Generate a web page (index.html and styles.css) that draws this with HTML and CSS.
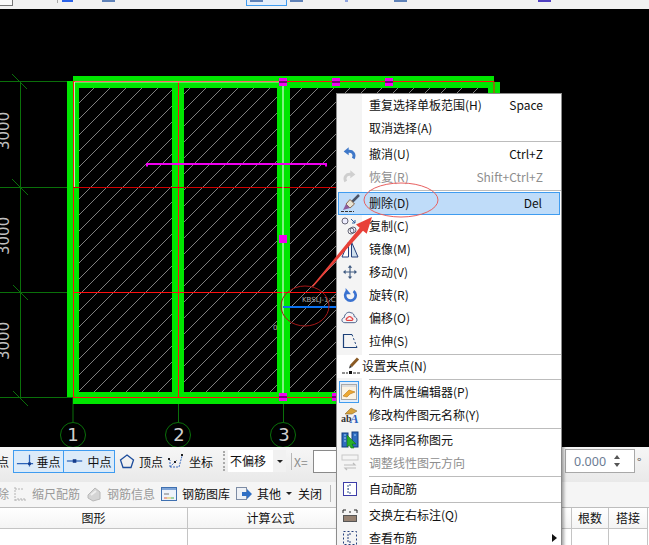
FILE: index.html
```html
<!DOCTYPE html>
<html lang="en">
<head>
    <meta charset="UTF-8">
    <meta name="viewport" content="width=device-width, initial-scale=1.0">
    <title>板受力筋</title>
    <link rel="stylesheet" href="styles.css">
</head>
<body>
    <div class="page">
        <!-- only the bottom edge of the ribbon is visible -->
        <div class="topbar">
            <span class="top-box"></span>
            <span class="top-sep"></span>
            <span class="top-icon top-blue"></span>
            <span class="top-icon top-steel"></span>
            <span class="top-selected"><span class="top-icon top-steel"></span></span>
            <span class="top-icon top-steel top-after"></span>
            <span class="top-icon top-tiny"></span>
            <span class="top-icon top-steel top-far"></span>
            <span class="top-icon top-purple"></span>
        </div>

        <svg class="canvas" width="649" height="438" viewBox="0 9 649 438">
            <defs>
                <pattern id="hatch" width="16" height="16" patternUnits="userSpaceOnUse" patternTransform="translate(6 0)">
                    <path d="M-1 17L17 -1" stroke="#b4b4b4" stroke-width="0.7"/>
                </pattern>
            </defs>
            <rect x="0" y="9" width="649" height="438" fill="#000"/>

            <!-- axis lines -->
            <g stroke="#0a700a" fill="none">
                <path d="M0 81.5H73M0 187.5H73M0 292.5H73M0 397.5H73"/>
                <path d="M20.5 81V397"/>
                <path d="M12 74L27 89M12 179L28 195M13 285L28 300M13 391L28 406"/>
                <path d="M73 397V422M178.5 397V422M283.5 397V422"/>
                <circle cx="73" cy="435" r="12.5"/>
                <circle cx="178" cy="435" r="12.5"/>
                <circle cx="283" cy="435" r="12.5"/>
            </g>
            <g class="dim-text">
                <text transform="translate(9 150) rotate(-90)">3000</text>
                <text transform="translate(9 255) rotate(-90)">3000</text>
                <text transform="translate(9 360) rotate(-90)">3000</text>
            </g>
            <g class="axis-text">
                <text x="73" y="441">1</text>
                <text x="179" y="441">2</text>
                <text x="284" y="441">3</text>
            </g>

            <!-- slab cells -->
            <rect x="79" y="88" width="93" height="304" fill="url(#hatch)"/>
            <rect x="184" y="88" width="93" height="304" fill="url(#hatch)"/>
            <rect x="290" y="88" width="200" height="304" fill="url(#hatch)"/>

            <!-- beams -->
            <g fill="#00e600">
                <rect x="73" y="76" width="421" height="12"/>
                <rect x="488" y="82" width="12" height="20"/>
                <rect x="67" y="81" width="12" height="316"/>
                <rect x="172" y="88" width="12" height="304"/>
                <rect x="277" y="88" width="13" height="304"/>
                <rect x="73" y="392" width="300" height="12"/>
            </g>
            <g stroke="#ff1010" fill="none">
                <path d="M73 81.5H494V100M73.5 81V398M178.5 81V398M73 397.5H373"/>
                <path d="M73 187.5H340" stroke="#d00000"/>
                <path d="M73 292.5H340"/>
            </g>
            <path d="M283 82V397" stroke="#fff"/>
            <path d="M74.5 82H282M74.5 82V187" stroke="#fff" stroke-width="0.7"/>

            <!-- picked bar -->
            <path d="M147 166.5V164H326V166.5" stroke="#f000f0" stroke-width="2" fill="none"/>
            <path d="M283 307H340" stroke="#0a70f0" stroke-width="2"/>
            <text class="bar-label" x="302" y="302">KBSLJ-1:C</text>
            <text class="bar-label" x="273" y="330">0</text>

            <!-- grips -->
            <g fill="#f000f0">
                <rect x="279" y="78" width="8" height="8"/>
                <rect x="332" y="78" width="8" height="8"/>
                <rect x="385" y="78" width="8" height="8"/>
                <rect x="279" y="235" width="8" height="8"/>
                <rect x="279" y="393" width="8" height="8"/>
                <rect x="332" y="393" width="8" height="8"/>
            </g>
            <path d="M279 82H287M332 82H340M385 82H393M279 397H287M332 397H340" stroke="#000"/>
        </svg>

        <div class="toolbar toolbar-snap">
            <span class="tool tool-cut">点</span>
            <span class="tool tool-on tool-first">
                <svg width="18" height="16" viewBox="0 0 20 16"><path d="M1 11H19M15 1V14" stroke="#2b62b8" stroke-width="1.4"/><rect x="13.5" y="9.5" width="3" height="3" fill="#143c8c"/></svg>
                垂点
            </span>
            <span class="tool tool-on">
                <svg width="18" height="16" viewBox="0 0 20 16"><path d="M1 8H18" stroke="#2b62b8" stroke-width="1.4"/><rect x="7.5" y="6" width="4" height="4" fill="#143c8c"/></svg>
                中点
            </span>
            <span class="tool tool-plain">
                <svg width="16" height="16" viewBox="0 0 16 16"><path d="M8 2L14.5 7L12 14.5H4L1.500 7Z" fill="none" stroke="#1d4d9c" stroke-width="1.300"/></svg>
                顶点
            </span>
            <span class="tool tool-plain">
                <svg width="18" height="18" viewBox="0 0 18 18"><path d="M3 15H12L15 4M3 15L3 8M3 15L10 8" fill="none" stroke="#3c6cc0" stroke-dasharray="2 1"/><rect x="1" y="6" width="2" height="2" fill="#222"/><rect x="14" y="2" width="2" height="2" fill="#222"/><rect x="7" y="9" width="2" height="2" fill="#222"/></svg>
                坐标
            </span>
            <span class="grip"></span>
            <span class="combo">不偏移<span class="combo-arrow"></span></span>
            <span class="rule"></span>
            <span class="coord-label">X=</span>
            <span class="coord-input"></span>
            <span class="angle-input">0.000<span class="spin"><i class="spin-up"></i><i class="spin-down"></i></span></span>
            <span class="degree">°</span>
        </div>

        <div class="toolbar toolbar-bars">
            <span class="bar-item bar-off bar-cut">除</span>
            <span class="bar-item bar-off bar-scale">
                <svg width="14" height="16" viewBox="0 0 14 16"><path d="M2 1V15M2 14H13M5 14V11M8 14V11M11 14V11M2 3H11" fill="none" stroke="#b4b4b4" stroke-dasharray="2 1"/></svg>
                缩尺配筋
            </span>
            <span class="bar-item bar-off bar-info">
                <svg width="16" height="16" viewBox="0 0 16 16"><path d="M2 9L9 2L14 6V13L7 15L2 12Z" fill="#d4d4d4" stroke="#b8b8b8"/><path d="M5 9L10 5" stroke="#eee" stroke-width="2"/></svg>
                钢筋信息
            </span>
            <span class="bar-item bar-lib">
                <svg width="16" height="14" viewBox="0 0 16 14"><rect x="0.500" y="0.500" width="15" height="13" fill="#eef3fb" stroke="#3f70b0"/><rect x="1" y="1" width="14" height="2" fill="#7fa5d8"/><path d="M3 7H8" stroke="#777"/><path d="M3 11H6" stroke="#e06040"/><path d="M6 11H10" stroke="#e0c040"/><path d="M10 11H13" stroke="#50b050"/></svg>
                钢筋图库
            </span>
            <span class="bar-item bar-other">
                <svg width="16" height="16" viewBox="0 0 16 16"><rect x="0.500" y="1.500" width="10" height="12" fill="#eef1f6" stroke="#7d8ca4"/><path d="M6 6H11V3L16 8L11 13V10H6Z" fill="#2f6fc4"/></svg>
                其他<span class="mini-arrow"></span>
            </span>
            <span class="bar-item bar-close">关闭</span>
            <span class="rule rule-bar"></span>
        </div>

        <div class="rebar-table">
            <div class="cell cell-head">图形</div>
            <div class="cell cell-head">计算公式</div>
            <div class="cell cell-head"></div>
            <div class="cell cell-head">根数</div>
            <div class="cell cell-head">搭接</div>
            <div class="cell"></div>
            <div class="cell"></div>
            <div class="cell"></div>
            <div class="cell"></div>
            <div class="cell"></div>
        </div>

        <!-- context menu -->
        <div class="menu">
            <div class="menu-item"><span class="menu-icon"></span><span class="menu-label">重复选择单板范围(H)</span><span class="menu-key">Space</span></div>
            <div class="menu-item"><span class="menu-icon"></span><span class="menu-label">取消选择(A)</span></div>
            <div class="menu-sep"></div>
            <div class="menu-item">
                <span class="menu-icon"><svg width="15" height="15" viewBox="0 0 18 18"><path d="M13.500 15C16 10 13 5.500 7 6.500" fill="none" stroke="#3f78c8" stroke-width="3.500"/><path d="M2 6.500L8 1.500V11Z" fill="#3f78c8"/></svg></span>
                <span class="menu-label">撤消(U)</span><span class="menu-key">Ctrl+Z</span>
            </div>
            <div class="menu-item item-off">
                <span class="menu-icon"><svg width="15" height="15" viewBox="0 0 18 18"><path d="M4.500 15C2 10 5 5.500 11 6.500" fill="none" stroke="#cfcfcf" stroke-width="3.500"/><path d="M16 6.500L10 1.500V11Z" fill="#cfcfcf"/></svg></span>
                <span class="menu-label">恢复(R)</span><span class="menu-key">Shift+Ctrl+Z</span>
            </div>
            <div class="menu-sep"></div>
            <div class="menu-item item-active">
                <span class="menu-icon"><svg width="20" height="20" viewBox="0 0 20 20"><path d="M18 2L11 9" stroke="#4a5468" stroke-width="2.500"/><path d="M9 6.500L13.500 11L9 15L5 11Z" fill="#e8e4d4" stroke="#8a6a50"/><path d="M5 11L9 15L2 17Z" fill="#8c5c9c"/><path d="M0 18.500H13" stroke="#333" stroke-dasharray="3 1"/></svg></span>
                <span class="menu-label">删除(D)</span><span class="menu-key">Del</span>
            </div>
            <div class="menu-item">
                <span class="menu-icon"><svg width="20" height="20" viewBox="0 0 20 20"><circle cx="5" cy="5" r="3" fill="#eef" stroke="#667"/><circle cx="13" cy="14" r="3" fill="#eef" stroke="#667"/><circle cx="11" cy="15" r="3" fill="none" stroke="#667"/><path d="M11 3L15 7M15 4V7H12" fill="none" stroke="#3060a0"/></svg></span>
                <span class="menu-label">复制(C)</span>
            </div>
            <div class="menu-item">
                <span class="menu-icon"><svg width="20" height="20" viewBox="0 0 20 20"><path d="M8.500 3L2 18H8.500Z" fill="#fff" stroke="#24407c"/><path d="M11.500 3L18 18H11.500Z" fill="#cfe0ee" stroke="#24407c"/></svg></span>
                <span class="menu-label">镜像(M)</span>
            </div>
            <div class="menu-item">
                <span class="menu-icon"><svg width="14" height="14" viewBox="0 0 16 16"><path d="M8 2V14M2 8H14" stroke="#3f5a80" stroke-width="1.300"/><path d="M8 0L5.500 3H10.500ZM8 16L5.500 13H10.500ZM0 8L3 5.500V10.500ZM16 8L13 5.500V10.500Z" fill="#3f5a80"/></svg></span>
                <span class="menu-label">移动(V)</span>
            </div>
            <div class="menu-item">
                <span class="menu-icon"><svg width="14" height="14" viewBox="0 0 16 16"><path d="M5 3.500A6 6 0 1 0 12 3.500" fill="none" stroke="#3a72d0" stroke-width="3"/><path d="M3 0V7H9Z" fill="#3a72d0"/></svg></span>
                <span class="menu-label">旋转(R)</span>
            </div>
            <div class="menu-item">
                <span class="menu-icon"><svg width="17" height="15" viewBox="0 0 18 16"><path d="M4 13.500C0 13.500 0 8.500 3.500 8C3.500 4 8 1 10.500 3C13 3 14 5 14 7C18 8 18 13.500 14 13.500Z" fill="#f4f4f8" stroke="#465c84"/><path d="M6.500 11C5 11 5 8.500 7 8.500C7 6.500 11 6.500 11 8.500C13 8.500 13 11 11.500 11Z" fill="#fff" stroke="#e04040" stroke-width="1.300"/></svg></span>
                <span class="menu-label">偏移(O)</span>
            </div>
            <div class="menu-item">
                <span class="menu-icon"><svg width="16" height="16" viewBox="0 0 16 16"><path d="M10 1.500H1.500V14.500H15" fill="none" stroke="#1c4078" stroke-width="1.200"/><path d="M10 1.500L15 14.500" fill="none" stroke="#1c4078" stroke-dasharray="2 2"/></svg></span>
                <span class="menu-label">拉伸(S)</span>
            </div>
            <div class="menu-sep menu-sep-thin"></div>
            <div class="menu-item item-grip">
                <svg class="grip-icon" width="18" height="18" viewBox="0 0 18 18"><path d="M16 1.500L9 9" stroke="#8a5a24" stroke-width="3"/><path d="M10 10L7 11.500L8 8Z" fill="#333"/><path d="M0 16H6M11 16H18" stroke="#222" stroke-dasharray="3 1"/><rect x="7" y="14" width="3" height="3" fill="#111"/></svg>
                <span class="menu-label">设置夹点(N)</span>
            </div>
            <div class="menu-sep"></div>
            <div class="menu-item">
                <span class="menu-icon icon-checked"><svg width="16" height="16" viewBox="0 0 16 16"><rect x="0.500" y="0.500" width="15" height="15" fill="#fbf3e4" stroke="#a8a8a8"/><rect x="1" y="1" width="14" height="2" fill="#dfdfdf"/><path d="M2 12L8 6L14 8L9 10L6 13Z" fill="#eda832" stroke="#b87818" stroke-width="0.600"/></svg></span>
                <span class="menu-label">构件属性编辑器(P)</span>
            </div>
            <div class="menu-item">
                <span class="menu-icon icon-name"><svg width="18" height="18" viewBox="0 0 18 18"><path d="M4 8L10 2L16 5L11 8Z" fill="#d8a23a" stroke="#8a6a30" stroke-width="0.600"/><text class="icon-ab" x="0" y="16">ab</text><text class="icon-a" x="9" y="17">A</text></svg></span>
                <span class="menu-label">修改构件图元名称(Y)</span>
            </div>
            <div class="menu-sep menu-sep-thin"></div>
            <div class="menu-item">
                <span class="menu-icon"><svg width="18" height="18" viewBox="0 0 18 18"><rect x="1" y="2" width="6" height="14" fill="#2f6cc0" stroke="#123c80"/><rect x="11" y="1" width="6" height="15" fill="#2f6cc0" stroke="#123c80"/><path d="M3 4H5M3 7H5M3 10H5M13 4H15" stroke="#a8d0f8"/><path d="M6 4L15 13H11L13 17H10L8 14L6 16Z" fill="#28b028" stroke="#127012" stroke-width="0.600"/></svg></span>
                <span class="menu-label">选择同名称图元</span>
            </div>
            <div class="menu-item item-off">
                <span class="menu-icon"><svg width="18" height="18" viewBox="0 0 18 18"><rect x="1" y="1" width="16" height="5" fill="#f4f4f4" stroke="#c8c8c8"/><path d="M3 11H14L12 9M15 14H4L6 16" fill="none" stroke="#bcbcbc" stroke-width="1.200"/></svg></span>
                <span class="menu-label">调整线性图元方向</span>
            </div>
            <div class="menu-sep"></div>
            <div class="menu-item">
                <span class="menu-icon"><svg width="16" height="16" viewBox="0 0 16 16"><rect x="1.500" y="1.500" width="13" height="13" fill="#fff" stroke="#3c3ca8"/><path d="M9 4H6V12H9M6 8H7" fill="none" stroke="#3c5c90" stroke-dasharray="2 1"/></svg></span>
                <span class="menu-label">自动配筋</span>
            </div>
            <div class="menu-sep"></div>
            <div class="menu-item">
                <span class="menu-icon"><svg width="16" height="16" viewBox="0 0 16 16"><path d="M1 6V3H4M15 6V3H12M7 5H9" fill="none" stroke="#222"/><rect x="1" y="8" width="14" height="7" fill="#555"/><path d="M3 9V14M5 9V14M7 9V14M9 9V14M11 9V14M13 9V14" stroke="#d8b090"/></svg></span>
                <span class="menu-label">交换左右标注(Q)</span>
            </div>
            <div class="menu-item">
                <span class="menu-icon"><svg width="16" height="16" viewBox="0 0 16 16"><rect x="1.500" y="1.500" width="13" height="13" fill="none" stroke="#26407c" stroke-dasharray="2 2"/><path d="M9 4H6V12H9" fill="none" stroke="#26407c" stroke-dasharray="2 1"/></svg></span>
                <span class="menu-label">查看布筋</span><span class="menu-more"></span>
            </div>
        </div>

        <!-- red marks drawn over the screenshot -->
        <svg class="marks" width="649" height="545" viewBox="0 0 649 545">
            <ellipse cx="305" cy="306" rx="24" ry="20" fill="none" stroke="#a81818"/>
            <ellipse cx="401" cy="200" rx="37" ry="17" fill="none" stroke="#e86060"/>
            <path d="M312 286L359.700 227.800L356 224.600L372 217L366.700 233.800L363 230.700L313 287Z" fill="#e84038"/>
        </svg>
    </div>
</body>
</html>
```

FILE: styles.css
```css
* {
    margin: 0;
    padding: 0;
    box-sizing: border-box;
}

body {
    font-family: "Noto Sans CJK SC", "Noto Sans", sans-serif;
    font-size: 12px;
    color: #111;
    background-color: #fff;
}

.page {
    position: relative;
    width: 649px;
    height: 545px;
    overflow: hidden;
    display: flex;
    flex-direction: column;
}

/* ribbon edge */
.topbar {
    height: 9px;
    flex: none;
    display: flex;
    align-items: flex-start;
    background-color: #f1f1f1;
    overflow: hidden;
}

.top-box {
    width: 15px;
    height: 6px;
    margin-left: -2px;
    border: 1px solid #777;
    border-top: none;
    background-color: #fafafa;
}

.top-sep {
    width: 1px;
    height: 3px;
    margin-left: 44px;
    background-color: #aaa;
}

.top-icon {
    display: block;
    height: 2px;
}

.top-blue {
    width: 11px;
    margin-left: 4px;
    background-color: #2b62e8;
}

.top-steel {
    width: 13px;
    background-color: #5f82b8;
}

.top-blue + .top-steel {
    margin-left: 29px;
}

.top-selected {
    width: 41px;
    height: 6px;
    margin-left: 131px;
    border: 1px solid #3f9cf0;
    border-top: none;
    background-color: #e4eefa;
    padding-left: 3px;
}

.top-after {
    margin-left: 3px;
}

.top-tiny {
    width: 3px;
    margin-left: 42px;
    background-color: #8fa4e0;
}

.top-far {
    margin-left: 46px;
}

.top-purple {
    width: 13px;
    margin-left: 131px;
    background-color: #5040c0;
}

.canvas {
    display: block;
    flex: none;
}

.dim-text {
    font-family: "DejaVu Sans", sans-serif;
    font-size: 15px;
    fill: #c0c0c0;
}

.axis-text {
    font-family: "DejaVu Sans", sans-serif;
    font-size: 18px;
    fill: #d0d0d0;
    text-anchor: middle;
}

.bar-label {
    font-family: "DejaVu Sans", sans-serif;
    font-size: 7px;
    fill: #b0b0b0;
}

/* bottom toolbars */
.toolbar {
    flex: none;
    display: flex;
    align-items: center;
    overflow: hidden;
    white-space: nowrap;
}

.toolbar-snap {
    height: 35px;
    padding-bottom: 7px;
    background: linear-gradient(#f6f6f6, #e9e9e9);
}

.toolbar-bars {
    height: 25px;
    padding-bottom: 2px;
    background-color: #f5f5f5;
}

.tool {
    display: flex;
    align-items: center;
}

.tool-cut {
    width: 16px;
    margin-left: -3px;
}

.tool-on {
    width: 51px;
    height: 23px;
    justify-content: center;
    gap: 2px;
    border: 1px solid #3f9cf0;
    background-color: #dcebf9;
}

.tool-on + .tool-on {
    margin-left: -1px;
    width: 52px;
    gap: 3px;
}

.tool-plain {
    gap: 4px;
    margin-left: 4px;
}

.tool-plain + .tool-plain {
    margin-left: 4px;
}

.grip {
    width: 2px;
    height: 20px;
    margin-left: 10px;
    border-left: 2px dotted #aaa;
}

.combo {
    position: relative;
    width: 58px;
    height: 22px;
    margin-left: 3px;
    padding-left: 2px;
    line-height: 21px;
    font-size: 12px;
    background: linear-gradient(90deg, #fff 78%, #f1f1f1 78%);
}

.combo-arrow {
    position: absolute;
    right: 3px;
    top: 10px;
    border: 3px solid transparent;
    border-top: 3px solid #222;
}

.rule {
    width: 1px;
    height: 17px;
    margin-left: 5px;
    background-color: #b8b8b8;
}

.coord-label {
    margin-left: 2px;
    width: 19px;
    color: #8a8a8a;
}

.coord-input {
    width: 60px;
    height: 23px;
    border: 1px solid #8a8a8a;
    background-color: #fff;
}

.angle-input {
    display: flex;
    align-items: center;
    justify-content: flex-end;
    width: 70px;
    height: 24px;
    margin-left: 192px;
    padding-right: 14px;
    gap: 8px;
    font-family: "Noto Sans", sans-serif;
    font-size: 12.500px;
    color: #6c7c94;
    border: 1px solid #a8a8a8;
    background-color: #fff;
}

.spin {
    display: flex;
    flex-direction: column;
    gap: 4px;
}

.spin-up {
    border: 3px solid transparent;
    border-top: none;
    border-bottom: 4px solid #555;
}

.spin-down {
    border: 3px solid transparent;
    border-bottom: none;
    border-top: 4px solid #555;
}

.degree {
    margin-left: 2px;
    color: #555;
    align-self: flex-start;
    margin-top: 6px;
}

.bar-item {
    display: flex;
    align-items: center;
    gap: 5px;
}

.bar-off {
    color: #9a9a9a;
}

.bar-cut {
    width: 9px;
    margin-left: -3px;
}

.bar-scale {
    margin-left: 7px;
}

.bar-info {
    margin-left: 6px;
}

.bar-lib {
    margin-left: 6px;
}

.bar-other {
    margin-left: 6px;
}

.mini-arrow {
    border: 3px solid transparent;
    border-top: 3px solid #222;
    margin-top: 3px;
    margin-left: 0;
}

.bar-close {
    margin-left: 6px;
}

.rule-bar {
    margin-left: 8px;
}

/* table under the toolbars */
.rebar-table {
    flex: 1;
    display: grid;
    grid-template-columns: 188px 166px 218px 37px 39px;
    grid-template-rows: 21px 1fr;
    border-top: 1px solid #bdbdbd;
    background-color: #fff;
}

.cell {
    border-right: 1px solid #c4c4c4;
}

.cell-head {
    text-align: center;
    line-height: 19px;
    border-bottom: 1px solid #c4c4c4;
    background: linear-gradient(#fff, #f4f4f4);
}

/* context menu */
.menu {
    position: absolute;
    left: 336px;
    top: 93px;
    width: 226px;
    border: 1px solid #8c8c8c;
    border-bottom: none;
    background: linear-gradient(90deg, #f4f4f4 25px, #fff 25px);
    box-shadow: 2px 2px 3px rgba(0, 0, 0, 0.35);
}

.menu-item {
    position: relative;
    display: flex;
    align-items: center;
    height: 23px;
    padding-right: 18px;
    padding-bottom: 2px;
    white-space: nowrap;
}

.menu-icon {
    flex: none;
    width: 25px;
    height: 21px;
    margin-right: 7px;
    display: flex;
    align-items: center;
    justify-content: center;
}

.menu-label {
    flex: 1;
}

.menu-key {
    flex: none;
}

.menu-sep {
    height: 1px;
    margin: 1px 0 1px 32px;
    background-color: #bcbcbc;
}

.menu-sep-thin {
    margin-bottom: 0;
}

.item-off {
    color: #8e8e8e;
}

.item-active {
    margin-left: 1px;
    margin-right: 1px;
    padding-right: 17px;
    border: 1px solid #3f9cf0;
    background-color: #bfdcf9;
}

.item-active .menu-icon {
    width: 23px;
}

.item-grip {
    background-color: #fff;
    padding-left: 5px;
    gap: 2px;
}

.grip-icon {
    flex: none;
}

.icon-checked {
    width: 20px;
    height: 22px;
    margin-left: 2px;
    margin-right: 10px;
    border: 1px solid #3f9cf0;
    background-color: #e4eefa;
}

.icon-ab {
    font-family: "Liberation Serif", serif;
    font-size: 10px;
    font-weight: bold;
    fill: #333;
}

.icon-a {
    font-family: "Liberation Serif", serif;
    font-size: 13px;
    font-weight: bold;
    font-style: italic;
    fill: #2f62c0;
}

.menu-more {
    position: absolute;
    right: 4px;
    top: 7px;
    border: 4px solid transparent;
    border-left: 5px solid #111;
    border-right: none;
}

.marks {
    position: absolute;
    left: 0;
    top: 0;
    pointer-events: none;
}
```
